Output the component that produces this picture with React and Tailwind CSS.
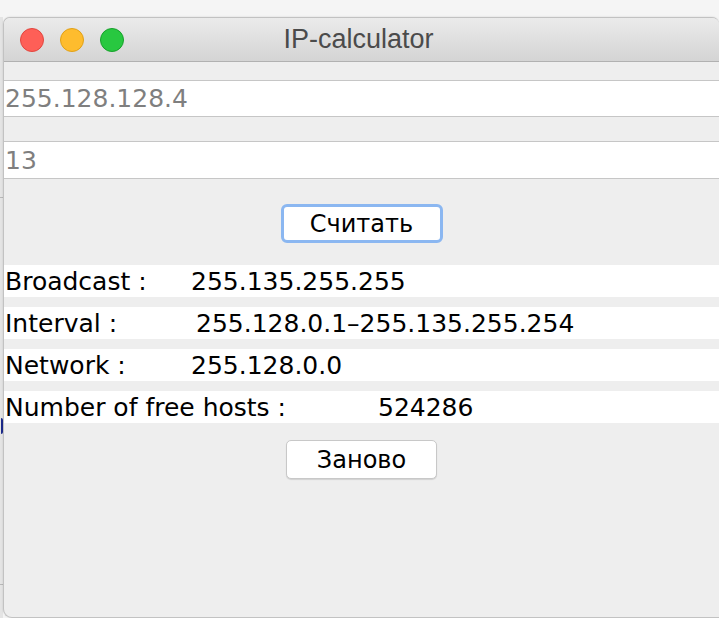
import React from 'react';

const rows = [
  { label: 'Broadcast :', value: '255.135.255.255', labelW: 'w-[186px]' },
  { label: 'Interval :', value: '255.128.0.1–255.135.255.254', labelW: 'w-[191px]' },
  { label: 'Network :', value: '255.128.0.0', labelW: 'w-[186px]' },
  { label: 'Number of free hosts :', value: '524286', labelW: 'w-[373px]' },
];

const App = () => {
  return (
    <div className="flex h-[618px] w-[719px] overflow-hidden bg-[#f5f5f5]">
      {/* desktop behind the window */}
      <div className="mt-[17px] flex w-[3px] flex-col bg-[#e4e4e4]">
        <div className="mt-[180px] h-px bg-[#b8b8b8]" />
        <div className="ml-[1px] mt-[220px] h-[16px] rounded-r-full border-r-2 border-[#1c2a8c]" />
        <div className="mt-[150px] h-px bg-[#b8b8b8]" />
      </div>

      {/* window */}
      <div className="mt-[17px] flex flex-1 flex-col overflow-hidden rounded-t-[7px] rounded-bl-[9px] border border-r-0 border-[#c2c2c2] bg-[#eeeeee] shadow-[0_0_2px_rgba(0,0,0,0.15)]">
        {/* title bar */}
        <div className="flex h-[44px] shrink-0 items-center border-b border-[#b1b1b1] bg-gradient-to-b from-[#ebebeb] to-[#d4d4d4] px-[16px]">
          <div className="flex items-center gap-[16px]">
            <span className="h-[24px] w-[24px] rounded-full border border-[#e2463f] bg-[#fe5f57]" />
            <span className="h-[24px] w-[24px] rounded-full border border-[#e1a116] bg-[#febc2e]" />
            <span className="h-[24px] w-[24px] rounded-full border border-[#17a12b] bg-[#28c840]" />
          </div>
          <div
            className="flex-1 pr-[110px] text-center text-[27px] text-[#4b4b4b]"
            style={{ fontFamily: '"Liberation Sans", Arial, sans-serif' }}
          >
            IP-calculator
          </div>
        </div>

        {/* content */}
        <div
          className="flex flex-col text-[25px] leading-none"
          style={{ fontFamily: '"DejaVu Sans", "Noto Sans", sans-serif' }}
        >
          <div className="mt-[18px] flex h-[37px] items-center border-y border-[#c6c6c6] bg-white px-[1px] text-[#7f7f7f]">
            255.128.128.4
          </div>
          <div className="mt-[24px] flex h-[38px] items-center border-y border-[#c6c6c6] bg-white px-[1px] text-[#7f7f7f]">
            13
          </div>

          <div className="mt-[25px] flex justify-center">
            <button className="flex h-[39px] w-[162px] items-center justify-center rounded-[6px] border-[3px] border-[#8bb7f1] bg-white text-[24px] text-black">
              Считать
            </button>
          </div>

          <div className="mt-[22px] flex flex-col gap-[10px]">
            {rows.map((r) => (
              <div key={r.label} className="flex h-[32px] items-center bg-white px-[1px] text-black">
                <span className={r.labelW}>{r.label}</span>
                <span>{r.value}</span>
              </div>
            ))}
          </div>

          <div className="mt-[17px] flex justify-center">
            <button className="flex h-[39px] w-[151px] items-center justify-center rounded-[5px] border border-[#c8c8c8] bg-white text-[24px] text-black shadow-[0_1px_1px_rgba(0,0,0,0.12)]">
              Заново
            </button>
          </div>
        </div>
      </div>
    </div>
  );
};

export default App;
